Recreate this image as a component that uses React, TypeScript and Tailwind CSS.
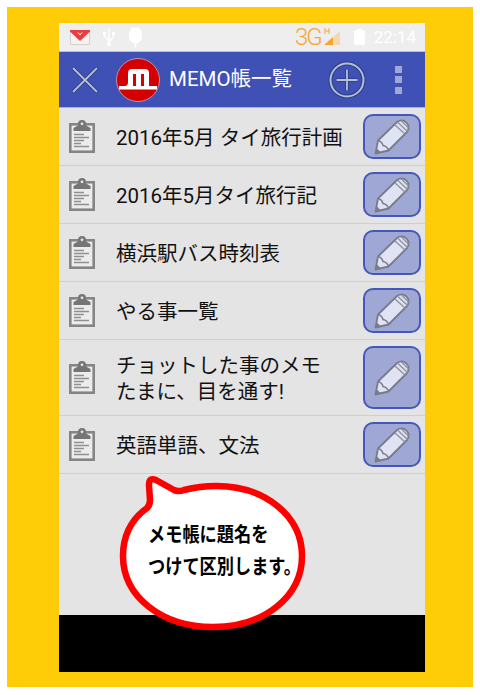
const font = "font-['Roboto','Noto_Sans_CJK_JP',sans-serif]";

function Clip() {
  return (
    <svg width="26" height="33" viewBox="0 0 26 33" className="shrink-0 -mt-[1px]">
      <rect x="1.300" y="4.300" width="23.400" height="27.400" fill="#ececec" stroke="#858585" strokeWidth="2.600" />
      <path d="M4.500 11V8L9 5.500V4A4 4 0 0 1 17 4V5.500L21.500 8V11Z" fill="#757575" />
      <circle cx="13" cy="3.800" r="1.400" fill="#e8e8e8" />
      <path d="M5 14.500H15M5 17.500H20M5 20.500H15M5 23.500H12M5 26.500H20" stroke="#8f8f8f" strokeWidth="1.300" />
    </svg>
  );
}

function Pencil() {
  return (
    <svg width="36" height="36" viewBox="0 0 36 36">
      <path
        d="M1.500 34.500 L4 21.500 L23 3 Q28 -0.500 32.500 3.500 Q36.500 8 33 13 L14.500 31.500 Z"
        fill="#e0e3f3"
        stroke="#787b88"
        strokeWidth="1.800"
        strokeLinejoin="round"
      />
      <path d="M4 21.500 Q8 22.500 9 26.500 Q13.500 27.500 14.500 31.500" fill="none" stroke="#787b88" strokeWidth="1.500" />
      <path d="M1.500 34.500 L3 29.500 L6.500 33 Z" fill="#787b88" />
      <path d="M21 6 L31 15 M24 3.500 L33.500 12.500 M27.500 2 L34.500 9" stroke="#9295a3" strokeWidth="1.500" />
    </svg>
  );
}

function Row({ lines, h }: { lines: string[]; h: string }) {
  return (
    <div className={`${h} flex items-center border-b border-[#cfcfcf] pl-[10px] pr-[4px]`}>
      <Clip />
      <div className="ml-[21px] mt-[3px] flex-1 text-[20.5px] leading-[26px] text-[#111]">
        {lines.map((l) => (
          <div key={l} className="whitespace-nowrap">{l}</div>
        ))}
      </div>
      <div className="w-[58px] self-stretch my-[6px] flex items-center justify-center rounded-[10px] border-2 border-[#4557bd] bg-[#9fa8d5]">
        <Pencil />
      </div>
    </div>
  );
}

export default function App() {
  return (
    <div className={`relative w-[480px] h-[695px] bg-white overflow-hidden pl-[7px] pt-[7px] ${font}`}>
      <div className="w-[466px] h-[680px] bg-[#ffcd07] pl-[52px] pt-[16px]">
        <div className="w-[366px] flex flex-col">
          <div className="h-[29px] bg-[#eeeeee] border-b border-[#b8bcd8] flex items-center pl-[11px] pr-[9px]">
            <svg width="20" height="15" viewBox="0 0 20 15">
              <rect x="0.500" y="0.500" width="19" height="14" fill="#f7f2ef" stroke="#d4cfcf" />
              <path d="M0 0 H20 V1.500 L10 11 L0 1.500 Z" fill="#ee3c3c" />
              <path d="M8 2.500 L10 5 L12 2.500" fill="none" stroke="#fff" />
            </svg>
            <svg width="14" height="20" viewBox="0 0 14 20" className="ml-[12px]">
              <path d="M7 1V17M7 13L2.500 9V7M7 15L11.500 10V7" fill="none" stroke="#fff" strokeWidth="1.300" />
              <circle cx="7" cy="17" r="2" fill="#fff" />
              <rect x="1" y="5" width="3" height="3" fill="#fff" />
              <rect x="10" y="5" width="3" height="3" fill="#fff" />
            </svg>
            <svg width="15" height="21" viewBox="0 0 15 21" className="ml-[12px]">
              <path d="M1 7A6.500 6.500 0 0 1 14 7V10A6.500 6.500 0 0 1 1 10Z" fill="#fff" />
              <path d="M3.500 0.500L5 3M11.500 0.500L10 3M7.500 14V20.500" stroke="#fff" strokeWidth="1.800" />
            </svg>
            <div className="flex-1" />
            <span className="text-[#f9a533] text-[24px] leading-none tracking-[-2px] font-light">3G</span>
            <svg width="18" height="18" viewBox="0 0 18 18" className="ml-[3px]">
              <path d="M1 0V6M5 0V6M1 3H5" stroke="#f9a533" strokeWidth="1" />
              <path d="M0 17L16 3V17Z" fill="#f5d9ad" />
              <path d="M0 17L9 9V17Z" fill="#f9a533" />
            </svg>
            <svg width="11" height="16" viewBox="0 0 11 16" className="ml-[12px]">
              <path d="M3 0H8V1.500H11V16H0V1.500H3Z" fill="#fff" />
            </svg>
            <span className="ml-[9px] text-[17px] leading-none text-white">22:14</span>
          </div>
          <div className="h-[56px] bg-[#3f51b5] border-b border-[#a9b0d8] flex items-center pl-[12px] pr-[23px]">
            <svg width="28" height="28" viewBox="0 0 28 28">
              <path d="M2.500 2.500L25.500 25.500M25.500 2.500L2.500 25.500" stroke="#2f3c85" strokeWidth="3.600" strokeLinecap="round" />
              <path d="M2.500 2.500L25.500 25.500M25.500 2.500L2.500 25.500" stroke="#b6bfd8" strokeWidth="1.800" strokeLinecap="round" />
            </svg>
            <svg width="44" height="44" viewBox="0 0 44 44" className="ml-[17px]">
              <circle cx="22" cy="22" r="21.500" fill="#d40000" stroke="#c8a8b8" strokeWidth="0.800" />
              <path d="M3 28H9Q12 28 12 24V15Q12 11 16 11H29Q33 11 33 15V28H41V31.500H3Z" fill="#fff" />
              <rect x="17" y="16" width="3" height="12" fill="#d40000" />
              <rect x="25" y="16" width="3" height="12" fill="#d40000" />
            </svg>
            <span className="ml-[9px] text-[20.5px] text-white leading-none whitespace-nowrap">MEMO帳一覧</span>
            <div className="flex-1" />
            <svg width="38" height="38" viewBox="0 0 38 38">
              <circle cx="19" cy="19" r="16.500" fill="none" stroke="#2f3c85" strokeWidth="4" />
              <circle cx="19" cy="19" r="16.500" fill="none" stroke="#b6bfd8" strokeWidth="2" />
              <path d="M19 8V30M8 19H30" stroke="#2f3c85" strokeWidth="3.600" />
              <path d="M19 8.500V29.500M8.500 19H29.500" stroke="#b6bfd8" strokeWidth="1.800" />
            </svg>
            <div className="ml-[29px] flex flex-col gap-[3.5px]">
              <div className="w-[7px] h-[7px] bg-[#9fa8d5]" />
              <div className="w-[7px] h-[7px] bg-[#9fa8d5]" />
              <div className="w-[7px] h-[7px] bg-[#9fa8d5]" />
            </div>
          </div>
          <div className="h-[507px] bg-[#e4e4e4] flex flex-col">
            <Row h="h-[58px]" lines={["2016年5月 タイ旅行計画"]} />
            <Row h="h-[58px]" lines={["2016年5月タイ旅行記"]} />
            <Row h="h-[58px]" lines={["横浜駅バス時刻表"]} />
            <Row h="h-[58px]" lines={["やる事一覧"]} />
            <Row h="h-[76px]" lines={["チョットした事のメモ", "たまに、目を通す!"]} />
            <Row h="h-[58px]" lines={["英語単語、文法"]} />
          </div>
          <div className="h-[57px] bg-black" />
        </div>
      </div>
      <svg width="480" height="695" viewBox="0 0 480 695" className="absolute left-0 top-0">
        <path
          d="M147 508 Q150 505 150 500 L149 485 Q149 477 156 480 L174 490 Q178 492 184 490 Q200 486 216 486 C265 486 302 516 302 556 C302 596 265 627 213 627 C161 627 123 596 123 556 C123 535 132 519 147 508 Z"
          fill="#fff"
          stroke="#ff0000"
          strokeWidth="6.500"
          strokeLinejoin="round"
        />
      </svg>
      <div className="absolute left-[148px] top-[519px] text-[17.2px] leading-[32px] font-bold text-black whitespace-nowrap">
        <div className="scale-y-[1.2]">メモ帳に題名を</div>
        <div className="scale-y-[1.2]">つけて区別します。</div>
      </div>
    </div>
  );
}
